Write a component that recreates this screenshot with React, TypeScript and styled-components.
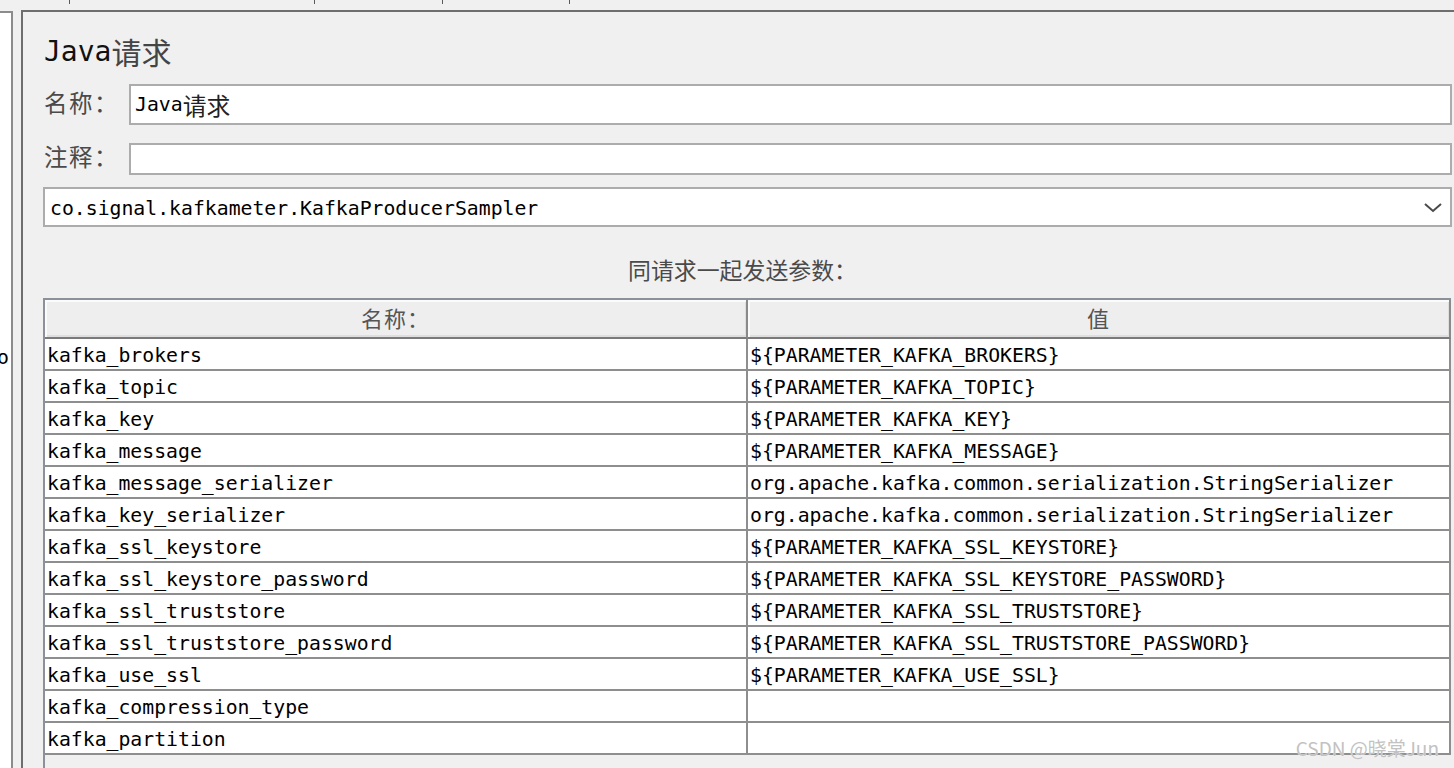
import React from "react";
import styled, { createGlobalStyle } from "styled-components";

const MONO = `"DejaVu Sans Mono", "Noto Sans CJK SC", monospace`;
const CJK = `"Noto Sans CJK SC", "Noto Sans", sans-serif`;

const GlobalStyle = createGlobalStyle`
  html, body { margin: 0; padding: 0; }
  body {
    background: #f0f0f0;
    width: 1454px;
    height: 768px;
    overflow: hidden;
    font-family: ${MONO};
  }
  * { box-sizing: border-box; }
`;

const Frame = styled.div`
  width: 1454px;
  height: 768px;
  display: flex;
  flex-direction: column;
  background: #f0f0f0;
`;

const TabStrip = styled.div`
  display: flex;
  height: 10px;
  flex: none;
`;

const Tab = styled.div<{ $w: number }>`
  width: ${(p) => p.$w}px;
  height: 4px;
  border-right: 1px solid #5a5a5a;
`;

const Body = styled.div`
  flex: 1;
  display: flex;
  min-height: 0;
`;

const TreePane = styled.div`
  width: 13px;
  flex: none;
  margin-top: 1px;
  background: #fff;
  border-top: 2px solid #8c8c8c;
  border-right: 2px solid #8c8c8c;
  overflow: hidden;
`;

const TreeText = styled.div`
  margin-top: 330px;
  margin-left: -3px;
  font: 19.8px/30px ${MONO};
  white-space: nowrap;
  color: #000;
`;

const Gutter = styled.div`
  width: 8px;
  flex: none;
`;

const Main = styled.section`
  flex: 1;
  min-width: 0;
  display: flex;
  flex-direction: column;
  border-top: 2px solid #6e6e6e;
  border-left: 2px solid #6e6e6e;
  padding: 20px 2px 0 20px;
`;

const Title = styled.h1`
  margin: 0 0 0 1px;
  height: 40px;
  padding-bottom: 2px;
  display: flex;
  align-items: center;
  font-weight: normal;
  font-family: ${MONO};
  font-size: 28px;
  color: #111;
`;

const Han = styled.span<{ $size?: number; $color?: string }>`
  font-family: ${CJK};
  font-size: ${(p) => p.$size ?? 23.5}px;
  color: ${(p) => p.$color ?? "#444"};
`;

const FieldRow = styled.div<{ $top: number }>`
  display: grid;
  grid-template-columns: 86px 1fr;
  align-items: center;
  margin-top: ${(p) => p.$top}px;
`;

const Label = styled.div`
  padding: 0 0 4px 1px;
  font-family: ${CJK};
  font-size: 23.5px;
  line-height: 1;
  letter-spacing: 1.5px;
  color: #4a4a4a;
  white-space: nowrap;
`;

const Field = styled.div<{ $h: number }>`
  height: ${(p) => p.$h}px;
  border: 2px solid #acacac;
  background: #fff;
  display: flex;
  align-items: center;
  padding-left: 4px;
  font: 19.8px/1 ${MONO};
  color: #000;
  white-space: nowrap;
`;

const Combo = styled.div`
  margin-top: 12px;
  height: 40px;
  border: 2px solid #acacac;
  background: #fff;
  display: flex;
  align-items: center;
  justify-content: space-between;
  padding: 3px 8px 0 5px;
  font: 19.8px/1 ${MONO};
  color: #000;
`;

const Chevron = styled.svg`
  width: 18px;
  height: 10px;
  margin-top: -1px;
  flex: none;
`;

const SectionLabel = styled.div`
  margin-top: 27px;
  height: 30px;
  line-height: 30px;
  text-align: center;
  padding-right: 10px;
  font-family: ${CJK};
  font-size: 22.9px;
  color: #4a4a4a;
`;

const TableBox = styled.div`
  position: relative;
  flex: 1;
  margin-top: 14px;
  margin-right: 1px;
  border-left: 2px solid #8b9099;
  border-top: 2px solid #8b9099;
`;

const Grid = styled.div`
  display: grid;
  grid-template-columns: repeat(2, 1fr);
`;

const HeaderCell = styled.div`
  height: 39px;
  padding-bottom: 4px;
  background: #eeeeee;
  border-right: 2px solid #8a8a8a;
  border-bottom: 2px solid #7a7a7a;
  box-shadow: inset 2px 2px 0 #fbfbfb, inset -1px -2px 0 #dedede;
  display: flex;
  align-items: center;
  justify-content: center;
  font-family: ${CJK};
  font-size: 22px;
  line-height: 1;
  letter-spacing: 1px;
  color: #555;
`;

const Cell = styled.div`
  height: 32px;
  background: #fff;
  border-right: 2px solid #8e8e8e;
  border-bottom: 2px solid #8e8e8e;
  padding: 3px 0 0 2px;
  font: 19.8px/27px ${MONO};
  color: #000;
  white-space: nowrap;
  overflow: hidden;
`;

const Watermark = styled.div`
  position: absolute;
  right: 12px;
  bottom: 7px;
  font-family: ${CJK};
  font-size: 19px;
  color: #c2c2c2;
  text-shadow: 0 0 1px #fff;
  pointer-events: none;
`;

const SER = "org.apache.kafka.common.serialization.StringSerializer";

const rows: [string, string][] = [
  ["kafka_brokers", "${PARAMETER_KAFKA_BROKERS}"],
  ["kafka_topic", "${PARAMETER_KAFKA_TOPIC}"],
  ["kafka_key", "${PARAMETER_KAFKA_KEY}"],
  ["kafka_message", "${PARAMETER_KAFKA_MESSAGE}"],
  ["kafka_message_serializer", SER],
  ["kafka_key_serializer", SER],
  ["kafka_ssl_keystore", "${PARAMETER_KAFKA_SSL_KEYSTORE}"],
  ["kafka_ssl_keystore_password", "${PARAMETER_KAFKA_SSL_KEYSTORE_PASSWORD}"],
  ["kafka_ssl_truststore", "${PARAMETER_KAFKA_SSL_TRUSTSTORE}"],
  ["kafka_ssl_truststore_password", "${PARAMETER_KAFKA_SSL_TRUSTSTORE_PASSWORD}"],
  ["kafka_use_ssl", "${PARAMETER_KAFKA_USE_SSL}"],
  ["kafka_compression_type", ""],
  ["kafka_partition", ""],
];

export default function App() {
  return (
    <>
      <GlobalStyle />
      <Frame>
        <TabStrip>
          <Tab $w={70} />
          <Tab $w={245} />
          <Tab $w={128} />
          <Tab $w={127} />
        </TabStrip>
        <Body>
          <TreePane>
            <TreeText>or</TreeText>
          </TreePane>
          <Gutter />
          <Main>
            <Title>
              Java<Han $size={30}>请求</Han>
            </Title>
            <FieldRow $top={12}>
              <Label>名称：</Label>
              <Field $h={41}>
                Java<Han $size={23.8} $color="#222">请求</Han>
              </Field>
            </FieldRow>
            <FieldRow $top={18}>
              <Label>注释：</Label>
              <Field $h={32} />
            </FieldRow>
            <Combo>
              <span>co.signal.kafkameter.KafkaProducerSampler</span>
              <Chevron viewBox="0 0 18 10">
                <polyline points="1,1 9,8 17,1" fill="none" stroke="#4a4a4a" strokeWidth="2" />
              </Chevron>
            </Combo>
            <SectionLabel>同请求一起发送参数：</SectionLabel>
            <TableBox>
              <Grid>
                <HeaderCell>名称：</HeaderCell>
                <HeaderCell>值</HeaderCell>
                {rows.map(([k, v]) => (
                  <React.Fragment key={k}>
                    <Cell>{k}</Cell>
                    <Cell>{v}</Cell>
                  </React.Fragment>
                ))}
              </Grid>
              <Watermark>CSDN @晓棠Jun</Watermark>
            </TableBox>
          </Main>
        </Body>
      </Frame>
    </>
  );
}
